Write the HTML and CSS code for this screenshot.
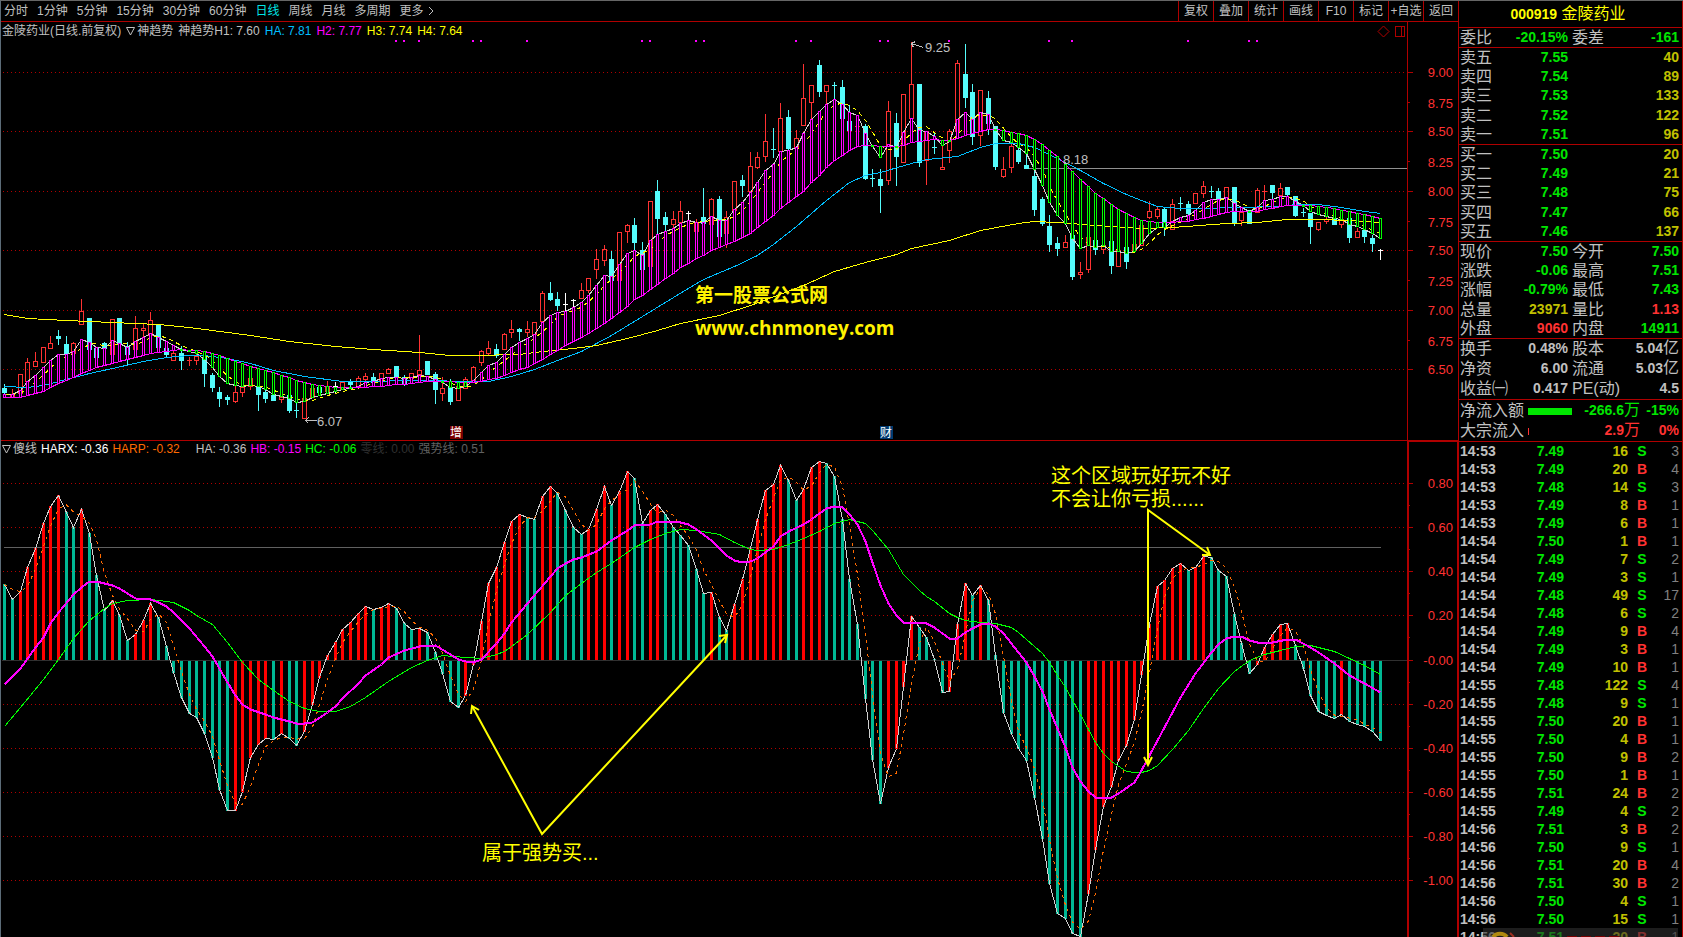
FILE: index.html
```html
<!DOCTYPE html>
<html lang="zh-CN">
<head>
<meta charset="utf-8">
<title>金陵药业 000919 日线</title>
<link rel="stylesheet" href="styles.css">
</head>
<body>
<div class="app">
  <main class="main">
    <header class="toolbar">
      <nav class="periods">
        <a href="#">分时</a><a href="#">1分钟</a><a href="#">5分钟</a><a href="#">15分钟</a><a href="#">30分钟</a><a href="#">60分钟</a><a href="#" class="active">日线</a><a href="#">周线</a><a href="#">月线</a><a href="#">多周期</a><a href="#" class="more">更多<svg class="chevron" viewBox="0 0 6 10" aria-hidden="true"><path d="M1 1l4 4-4 4"/></svg></a>
      </nav>
      <div class="tools">
        <button type="button">复权</button><button type="button">叠加</button><button type="button">统计</button><button type="button">画线</button><button type="button">F10</button><button type="button">标记</button><button type="button">+自选</button><button type="button">返回</button>
      </div>
    </header>

    <section class="panel price-panel">
      <div class="legend">
        <span>金陵药业(日线.前复权)</span><span class="pick"><svg class="tri" viewBox="0 0 9 9" aria-hidden="true"><path d="M.5 .5h8L4.500 8z"/></svg>神趋势</span><span>神趋势H1: 7.60</span><span class="c-sky">HA: 7.81</span><span class="c-mag">H2: 7.77</span><span class="c-yel">H3: 7.74</span><span class="c-yel">H4: 7.64</span>
      </div>
      <svg id="price" class="chart" viewBox="0 22 1459 418" role="img" aria-label="日线K线图"></svg>
    </section>

    <section class="panel osc-panel">
      <div class="legend tight">
        <span class="pick"><svg class="tri" viewBox="0 0 9 9" aria-hidden="true"><path d="M.5 .5h8L4.500 8z"/></svg>傻线</span><span class="c-white">HARX: -0.36</span><span class="c-org">HARP: -0.32</span><span class="gap">HA: -0.36</span><span class="c-mag">HB: -0.15</span><span class="c-lime">HC: -0.06</span><span class="c-dim">零线: 0.00</span><span class="c-gray">强势线: 0.51</span>
      </div>
      <svg id="osc" class="chart" viewBox="0 440 1459 497" role="img" aria-label="傻线指标图"></svg>
    </section>
  </main>

  <aside class="side">
    <h1 class="title"><b>000919</b> 金陵药业</h1>
    <table class="grid4 one">
      <tr><th>委比</th><td class="g">-20.15%</td><th>委差</th><td class="g">-161</td></tr>
    </table>
    <table class="book">
      <tr><th>卖五</th><td class="g">7.55</td><td class="y">40</td></tr>
      <tr><th>卖四</th><td class="g">7.54</td><td class="y">89</td></tr>
      <tr><th>卖三</th><td class="g">7.53</td><td class="y">133</td></tr>
      <tr><th>卖二</th><td class="g">7.52</td><td class="y">122</td></tr>
      <tr><th>卖一</th><td class="g">7.51</td><td class="y">96</td></tr>
    </table>
    <table class="book">
      <tr><th>买一</th><td class="g">7.50</td><td class="y">20</td></tr>
      <tr><th>买二</th><td class="g">7.49</td><td class="y">21</td></tr>
      <tr><th>买三</th><td class="g">7.48</td><td class="y">75</td></tr>
      <tr><th>买四</th><td class="g">7.47</td><td class="y">66</td></tr>
      <tr><th>买五</th><td class="g">7.46</td><td class="y">137</td></tr>
    </table>
    <table class="grid4">
      <tr><th>现价</th><td class="g">7.50</td><th>今开</th><td class="g">7.50</td></tr>
      <tr><th>涨跌</th><td class="g">-0.06</td><th>最高</th><td class="g">7.51</td></tr>
      <tr><th>涨幅</th><td class="g">-0.79%</td><th>最低</th><td class="g">7.43</td></tr>
      <tr><th>总量</th><td class="y">23971</td><th>量比</th><td class="r">1.13</td></tr>
      <tr><th>外盘</th><td class="r">9060</th><th>内盘</th><td class="g">14911</td></tr>
    </table>
    <table class="grid4 loose">
      <tr><th>换手</th><td>0.48%</td><th>股本</th><td>5.04<i>亿</i></td></tr>
      <tr><th>净资</th><td>6.00</td><th>流通</th><td>5.03<i>亿</i></td></tr>
      <tr><th>收益㈠</th><td>0.417</td><th>PE(动)</th><td>4.5</td></tr>
    </table>
    <table class="flow">
      <tr><th>净流入额</th><td><span class="bar" style="width:44px"></span></td><td class="g">-266.6<i>万</i></td><td class="g">-15%</td></tr>
      <tr><th>大宗流入</th><td><span class="bar thin" style="width:1px"></span></td><td class="r">2.9<i>万</i></td><td class="r">0%</td></tr>
    </table>
    <div class="ticks"><table id="ticks"></table>
      <div class="mark" aria-hidden="true"><svg viewBox="0 0 195 9"><path d="M10 9a9 9 0 0 1 14 0" fill="none" stroke="#b08a10" stroke-width="4"/><path d="M27 5l4 4" stroke="#a03020" stroke-width="2"/><path d="M84 8.500h56" stroke="#7a0000" stroke-width="1" stroke-dasharray="10 4"/></svg></div>
    </div>
  </aside>
</div>
<script src="chart.js"></script>
</body>
</html>
```
FILE: styles.css
```css
* { box-sizing: border-box; }

body {
  margin: 0;
  background: #000;
  color: #c0c0c0;
  font: 12px/20px "Liberation Sans", "Noto Sans CJK SC", sans-serif;
}

.app {
  display: flex;
  height: 100vh;
  overflow: hidden;
  border-top: 1px solid #666;
  border-left: 1px solid #5c6c78;
}

.main {
  flex: 1;
  min-width: 0;
  display: flex;
  flex-direction: column;
  margin-left: -1px;
}

/* toolbar */
.toolbar {
  display: flex;
  justify-content: space-between;
  height: 21px;
  border-bottom: 1px solid #b00000;
  padding-left: 4px;
}
.periods { display: flex; gap: 9px; white-space: nowrap; }
.periods a { color: #c0c0c0; text-decoration: none; }
.periods .active { color: #00e6e6; }
.more { display: flex; align-items: center; gap: 4px; }
.chevron { width: 6px; height: 10px; fill: none; stroke: #c0c0c0; }
.tools { display: flex; border-right: 1px solid #b00000; }
.tools button {
  width: 35px;
  padding: 0;
  border: 0;
  border-left: 1px solid #b00000;
  background: none;
  color: #c0c0c0;
  font: inherit;
  white-space: nowrap;
}

/* chart panels */
.panel { position: relative; }
.legend {
  position: absolute;
  left: 2px;
  top: 0;
  display: flex;
  gap: 5px;
  line-height: 18px;
  white-space: nowrap;
}
.legend.tight { gap: 4px; }
.legend .gap { margin-left: 12px; }
.pick { display: flex; align-items: center; gap: 2px; }
.tri { width: 9px; height: 9px; fill: none; stroke: #c0c0c0; }
.chart { display: block; width: 100%; height: auto; }
.chart text { font-size: 13px; fill: #c0c0c0; }
.chart text.axis { fill: #ff3232; text-anchor: end; }
.chart text.badge { fill: #fff; font-size: 12px; text-anchor: middle; }
.chart text.note { fill: #ffff00; font-size: 20px; }
.chart text.site { fill: #fff200; font-size: 19px; font-weight: 700; }
.chart text.url { fill: #fff200; font: 700 19px "Open Sans", sans-serif; }
.crisp { shape-rendering: crispEdges; }

.c-sky { color: #00bfff; }
.c-mag { color: #ff00ff; }
.c-yel { color: #ffff00; }
.c-white { color: #fff; }
.c-org { color: #ff6a00; }
.c-lime { color: #00ff00; }
.c-dim { color: #303030; }
.c-gray { color: #606060; }

/* quote sidebar */
.side {
  flex: none;
  width: 224px;
  display: flex;
  flex-direction: column;
  border-right: 1px solid #b00000;
}
.title {
  margin: 0;
  height: 27px;
  padding-right: 5px;
  border-bottom: 1px solid #b00000;
  color: #ffff00;
  font-size: 16px;
  font-weight: 400;
  line-height: 26px;
  text-align: center;
}
.title b { font-size: 14px; }
.side table {
  width: 100%;
  table-layout: fixed;
  border-collapse: collapse;
}
.side > table { border-bottom: 1px solid #b00000; }
.side th, .side td { height: 19px; padding: 0; line-height: 19px; white-space: nowrap; }
.side th { font-size: 16px; font-weight: 400; text-align: left; padding-left: 1px; }
.side td { font-size: 14px; font-weight: 700; text-align: right; }
.side td i { font-size: 16px; font-style: normal; font-weight: 400; line-height: 16px; }
.side .g { color: #00e600; }
.side .y { color: #c0c000; }
.side .r { color: #ff3232; }
.grid4 th:first-child { width: 50px; }
.grid4 td:nth-child(2) { width: 59px; }
.grid4 th:nth-child(3) { width: 52px; padding-left: 4px; }
.grid4 td:last-child, .book td:last-child, .flow td:last-child { padding-right: 3px; }
.book { height: 97px; }
.grid4 { height: 97px; }
.grid4.one { height: 20px; }
.grid4.loose { height: 61px; }
.book th { width: 50px; }
.book td:nth-child(2) { width: 59px; }
.flow { height: 42px; }
.flow th { width: 69px; }
.flow td:nth-child(2) { width: 46px; text-align: left; }
.flow td:nth-child(3) { width: 66px; }
.bar { display: inline-block; height: 7px; background: #00e600; vertical-align: middle; }
.bar.thin { background: #ff3232; }

.ticks { position: relative; flex: 1; min-height: 0; overflow: hidden; }
.ticks td { height: 18px; line-height: 18px; }
.ticks td:nth-child(1) { width: 50px; padding-left: 1px; text-align: left; }
.ticks td:nth-child(2) { width: 55px; }
.ticks td:nth-child(3) { width: 64px; }
.ticks td:nth-child(4) { width: 28px; text-align: center; }
.ticks td:nth-child(5) { padding-right: 3px; color: #808080; font-weight: 400; }
.mark { position: absolute; right: 4px; bottom: 0; width: 195px; height: 9px; background: rgba(48, 48, 48, .6); }
.mark svg { display: block; width: 100%; height: 100%; }
```
FILE: chart.js
```js
const RED = '#ff3232', GRID = '#b00000', CYAN = '#54fcfc', MAG = '#ff00ff', GRN = '#00ff00';
const X = i => Math.round(4.2 + i * 7.684);

// candles: kind, high, body top, body bottom, low
const candles = `c384,388,392,393 r389,394,397,397 r374,374,393,397 r358,362,381,385 r352,361,366,366 r347,347,362,362 r336,343,348,348 c330,336,338,344 c336,344,353,353 r342,343,353,356
r299,311,324,325 c318,318,349,349 c347,348,357,359 c342,343,348,353 r319,319,354,354 c318,318,343,343 c342,347,354,364 r316,328,349,349 r324,328,330,339 r312,320,335,335
c324,324,347,347 c348,348,354,357 r349,353,360,361 c346,353,360,369 r357,360,361,365 r354,356,360,365 c354,357,373,386 c373,375,387,391 c387,392,398,406 c395,397,399,404
r386,392,401,403 r386,387,392,397 r373,378,386,390 c386,387,394,410 c389,392,398,402 c395,395,400,400 r394,397,399,403 c393,395,410,412 c401,410,411,417 r398,398,418,418
r384,388,397,397 c385,387,392,392 r381,386,391,393 w382,386,387,392 r382,382,389,389 c379,381,384,388 r376,378,386,386 r373,376,379,381 c373,377,382,382 r373,373,381,384
r368,369,373,374 c366,366,377,380 c375,377,383,385 r373,373,378,382 r335,370,374,380 c361,361,374,374 c372,374,389,403 r377,388,393,401 c379,387,401,404 r386,386,400,400
r377,379,388,388 r366,367,380,380 r350,351,362,366 r341,348,353,355 c344,349,355,357 r333,334,349,350 r320,329,332,338 c328,329,331,340 r321,329,332,337 r322,322,334,334
r291,293,321,321 c282,293,299,300 c292,299,305,310 w293,304,305,311 w299,300,301,307 r283,290,298,299 r278,278,290,293 r249,259,269,279 r245,249,260,266 c251,259,280,280
r232,232,280,280 r224,225,231,243 c218,225,242,254 c242,250,269,269 r201,201,266,266 c180,191,218,234 c212,217,224,230 r211,219,224,228 r201,211,222,223 w211,213,214,221
r219,222,231,231 c188,217,223,224 r198,199,224,224 c196,199,236,236 r211,217,233,248 r181,181,210,210 c175,180,185,196 r152,166,191,192 r152,157,167,169 r114,141,156,162
c128,149,150,157 r103,118,151,151 c110,117,148,149 r130,138,147,147 r64,98,125,125 r85,85,102,119 c60,65,91,96 r85,85,91,104 c82,85,86,99 c80,87,118,118
c105,121,130,130 r115,126,127,127 c124,126,178,179 c169,178,179,186 c169,179,185,212 r101,111,180,185 c113,123,156,185 r94,94,162,162 r42,84,118,118 c84,84,162,166
r131,131,160,185 c132,147,148,153 r145,167,169,169 r129,131,150,163 r60,63,131,131 c44,74,97,107 c84,92,136,144 r90,90,135,146 c91,98,123,134 c126,126,166,169
r157,169,176,178 r144,146,167,173 c147,150,161,163 c153,165,168,168 c169,176,209,215 c197,199,223,225 c215,226,244,251 c237,243,248,255 r235,242,247,248 c235,235,276,279
r262,272,274,279 r237,237,269,273 c238,240,249,254 r245,245,249,254 c241,241,265,273 r250,250,266,266 c247,247,261,268 r243,244,250,250 r225,225,245,245 r201,211,217,219
r207,209,216,219 c207,209,227,235 r199,204,229,229 c197,203,204,210 c201,204,213,215 r193,193,203,203 r181,186,193,198 c186,191,192,197 c188,191,198,199 r187,187,198,198
c187,187,223,225 r212,212,220,226 c210,211,223,223 r188,190,212,212 r185,191,191,199 c185,185,192,199 r183,188,195,195 c187,187,194,195 c196,196,215,216 c208,212,213,216
c213,213,226,243 r222,222,229,231 r217,219,221,224 c218,219,224,224 r217,219,224,228 c215,218,237,242 r228,231,237,237 c230,230,236,242 c235,238,243,251 w249,250,251,259`
  .split(/\s+/).map(s => [s[0], ...s.slice(1).split(',').map(Number)]);

const h1 = [394,394,390,381,375,367,360,354,354,351,339,342,347,348,340,343,347,341,337,333,337,341,345,349,351,353,359,367,376,383,385,386,385,386,389,394,396,398,402,401,397,395,393,391,389,388,386,382,381,378,377,377,378,377,375,376,379,382,387,388,386,380,
372,365,362,354,347,342,338,334,322,315,312,311,307,302,295,285,275,276,264,253,250,255,240,234,231,228,223,220,222,222,216,220,220,209,202,192,182,170,164,151,150,147,133,119,111,104,99,104,112,115,133,146,157,144,147,132,118,130,131,136,145,141,119,112,119,112,114,129,140,142,147,153,169,185,202,215,223,238,248,245,247,245,251,251,253,251,
243,233,227,227,221,217,215,210,202,199,199,197,203,207,211,207,200,199,196,196,201,205,211,214,216,218,219,224,226,229,233,238];
const h2 = [397,397,397,395,393,391,387,383,380,377,373,370,367,365,363,361,359,357,355,353,352,351,350,349,350,350,351,353,355,358,361,363,366,368,370,372,375,377,380,382,384,385,386,387,387,387,387,387,386,386,385,384,384,383,382,381,381,381,381,382,382,382,
381,379,378,375,372,369,367,363,359,354,350,345,341,337,333,328,323,318,312,306,299,295,289,284,278,273,267,263,258,255,250,247,244,241,237,233,227,221,215,208,202,196,191,182,175,167,160,155,150,146,145,145,146,146,146,145,142,141,140,139,140,140,138,135,133,131,129,129,130,132,133,135,139,144,150,156,164,171,179,186,193,198,204,209,213,217,
220,221,222,222,222,221,221,219,218,216,214,212,211,211,211,211,209,208,206,205,205,205,205,206,207,208,210,211,213,214,216,218];

// slow averages: index, y
const slow = [0,386,3,387,5,385,7,381,11,373,14,368,18,361,21,357,24,355,26,355,29,358,32,363,35,370,39,376,44,381,48,381,52,380,56,380,59,381,63,381,66,376,69,369,72,360,75,351,79,335,83,316,87,297,91,279,95,266,98,255,100,244,103,226,107,200,110,182,112,175,114,172,118,163,120,159,124,156,127,147,129,143,132,143,134,147,137,158,140,170,143,183,146,194,148,200,150,206,153,208,156,208,160,207,166,206,168,204,171,204,174,207,177,211,179,213];
const base = [0,314,3,318,8,320,11,321,14,322,20,324,24,327,27,330,32,335,37,341,43,346,48,349,54,352,58,355,61,355,67,354,70,351,74,348,77,345,81,338,85,330,88,323,93,315,97,305,104,285,108,271,112,262,116,254,118,248,123,240,127,230,132,223,134,221,137,222,142,225,148,228,152,227,159,223,163,222,167,219,171,219,175,220,179,222];

// oscillator, measured from the top of its panel
const harx = [144,159,151,127,108,83,66,55,72,87,69,93,135,170,160,175,200,194,180,163,177,206,232,257,273,277,293,317,349,370,370,351,317,304,298,299,293,298,305,291,264,237,215,202,189,182,173,166,169,167,163,168,183,189,188,192,212,233,261,267,255,224,
181,143,127,102,81,74,77,79,56,46,53,70,87,94,89,69,46,65,51,31,38,83,70,64,74,87,95,105,129,153,152,177,190,164,139,108,79,50,44,25,40,60,49,27,21,23,36,79,139,184,258,319,363,327,308,246,176,187,197,219,252,251,184,143,155,145,160,215,272,293,308,320,357,398,443,473,478,493,496,453,409,366,346,320,305,279,234,184,146,140,128,123,130,127,116,117,130,136,174,203,233,224,207,194,184,183,205,228,255,271,275,278,274,281,284,286,291,300];
const hb = [0,244,2,228,4,207,5,197,6,183,7,172,9,154,10,147,11,141,12,141,14,145,15,148,16,153,17,158,19,159,20,162,21,166,22,172,24,188,26,206,27,216,29,242,30,255,31,264,32,269,34,274,35,277,37,281,38,283,39,283,40,282,42,272,43,266,44,258,46,243,47,235,49,224,50,217,52,210,54,206,56,205,58,214,59,219,60,221,61,222,62,219,64,203,65,193,66,182,68,163,71,136,72,128,73,123,74,119,75,117,77,111,79,100,81,90,82,85,84,84,85,81,86,81,88,82,89,84,90,89,92,100,93,108,94,115,95,120,96,122,97,121,98,118,100,106,101,96,102,91,104,84,105,79,106,73,107,68,108,66,109,67,110,74,111,84,112,101,113,122,114,145,115,163,116,175,117,182,119,182,120,183,121,187,122,193,123,198,124,198,125,192,126,188,127,184,128,183,129,186,130,193,132,212,133,222,134,236,135,251,136,269,137,288,138,307,139,327,140,341,141,351,142,357,144,357,145,353,147,342,148,330,149,315,151,287,152,272,153,257,155,233,157,212,158,204,159,198,160,196,161,196,162,200,163,202,165,202,167,199,168,199,170,207,171,212,173,223,175,235,177,243,179,252];
const hc = [0,286,2,267,5,239,7,219,9,198,11,180,13,168,14,163,16,160,19,159,21,161,22,162,24,170,25,175,27,184,29,202,31,222,33,239,35,250,37,261,39,268,41,271,43,271,45,266,47,257,50,241,53,227,55,220,57,215,60,217,62,218,64,214,65,211,66,206,68,194,71,172,73,155,75,143,77,132,79,123,82,107,84,99,86,93,88,89,90,90,93,94,95,102,97,109,98,110,100,109,102,104,104,98,106,91,108,83,110,79,112,83,113,90,115,109,117,134,119,150,120,156,121,161,123,173,124,177,125,180,127,182,129,183,131,187,132,192,134,206,135,213,136,222,137,235,138,247,140,274,142,302,143,313,144,321,146,331,147,332,148,332,149,330,150,325,152,309,154,290,156,268,158,248,160,231,162,220,164,214,166,210,168,206,170,205,171,207,173,211,175,218,177,225,179,234];

const rect = (x, y, w, h, fill) => `<rect x="${x}" y="${y}" width="${w}" height="${h}" fill="${fill}"/>`;
const box = (x, y, w, h, c, fill = 'none') => `<rect x="${x + .5}" y="${y + .5}" width="${w - 1}" height="${Math.max(h - 1, 1)}" fill="${fill}" stroke="${c}"/>`;
const line = (pts, c, extra = '') => `<polyline points="${pts.map(p => (p[0] + .5) + ',' + (p[1] + .5)).join(' ')}" fill="none" stroke="${c}" ${extra}/>`;
const arrow = pts => `<polyline points="${pts.map(p => p.join()).join(' ')}" fill="none" stroke="#ffff00" stroke-width="2"/>`;
const series = (a, dy = 0) => a.map((v, i) => [X(i), v + dy]);
const pairs = (a, dy = 0) => { const r = []; for (let i = 0; i < a.length; i += 2) r.push([X(a[i]), a[i + 1] + dy]); return r; };
const ma3 = a => a.map((v, i) => (v + a[Math.max(i - 1, 0)] + a[Math.max(i - 2, 0)]) / 3);
const text = (x, y, s, cls = '') => `<text x="${x}" y="${y}" class="${cls}">${s}</text>`;
const grid = y => line([[2, y], [1406, y]], GRID, 'stroke-dasharray="1 3"');

function drawPrice() {
  let s = '', t = '';
  [72, 131, 191, 250, 310, 369].forEach((y, k) => {
    s += grid(y) + rect(1408, y, 5, 1, GRID);
    t += text(1453, y + 5, (9 - k / 2).toFixed(2), 'axis');
    if (k < 5) { s += rect(1408, y + 30, 2, 1, GRID); t += text(1453, y + 36, (8.75 - k / 2).toFixed(2), 'axis'); }
  });
  s += rect(1407, 22, 1, 418, GRID) + rect(1458, 22, 1, 418, GRID) + rect(1027, 168, 380, 1, '#909090');
  candles.forEach(([k, hi, top, bot, lo], i) => {
    const x = X(i), c = k === 'r' ? RED : k === 'c' ? CYAN : '#fff', h = bot - top + 1;
    if (k === 'r' && h > 2) {
      s += rect(x, hi, 1, top - hi, c) + box(x - 2, top, 5, h, c) + rect(x, bot, 1, lo - bot, c);
    } else {
      s += rect(x, hi, 1, lo - hi + 1, c) + rect(x - 2, top, 5, h > 2 ? h : 1, c);
    }
  });
  s += line(series(h1), '#d0d0d0') + line(series(ma3(h1)), '#ffff00', 'stroke-dasharray="4 4"');
  s += line(pairs(slow), '#00bfff') + line(pairs(base), '#ffff00') + line(series(h2), MAG);
  h1.forEach((v, i) => {
    const a = Math.min(v, h2[i]), b = Math.max(v, h2[i]);
    s += box(X(i) - 1, a, 3, b - a + 1, v < h2[i] ? MAG : GRN, '#000');
  });
  [396, 404, 419, 473, 481, 527, 642, 650, 696, 704, 796, 811, 880, 888, 949, 1049, 1072, 1188, 1249, 1257].forEach(x => { s += rect(x - 1, 40, 2, 2, MAG); });
  s += line([[911, 43], [923, 47]], '#c0c0c0') + line([[915, 41], [911, 43], [913, 47]], '#c0c0c0');
  s += line([[305, 420], [316, 420]], '#c0c0c0') + line([[308, 417], [305, 420], [308, 423]], '#c0c0c0');
  s += box(1395, 26, 10, 11, GRID) + rect(1401, 26, 1, 11, GRID);
  s += rect(450, 426, 13, 13, '#7a0000') + rect(880, 426, 13, 13, '#003a70');
  t += `<path d="M1383.500 26l5.500 5.500-5.500 5.500-5.500-5.500z" fill="none" stroke="${GRID}"/>`;
  t += text(925, 52, '9.25') + text(317, 426, '6.07') + text(1063, 164, '8.18');
  t += text(456, 437, '增', 'badge') + text(886, 437, '财', 'badge');
  t += text(695, 302, '第一股票公式网', 'site') + text(695, 335, 'www.chnmoney.com', 'url');
  document.getElementById('price').innerHTML = `<g class="crisp">${s}</g>${t}`;
}

function drawOsc() {
  const top = 440, zero = 660;
  let s = '', t = '';
  [483, 527, 571, 615, 660, 704, 748, 792, 836, 880].forEach((y, k) => {
    s += (k === 4 ? '' : grid(y)) + rect(1409, y, 4, 1, GRID);
    if (k < 9) s += rect(1409, y + 22, 1, 1, GRID);
    t += text(1453, y + 5, (k === 4 ? '-' : '') + (.8 - k * .2).toFixed(2).replace('-0.00', '0.00'), 'axis');
  });
  s += rect(2, zero, 1405, 1, '#303030') + rect(0, 440, 1459, 1, GRID) + rect(1407, 440, 52, 2, GRID);
  s += rect(1407, 440, 2, 497, GRID) + rect(1457, 440, 2, 497, GRID) + rect(4, 547, 1377, 1, '#606060');
  harx.forEach((v, i) => {
    const y = top + v, c = i && v <= harx[i - 1] && i !== 30 ? '#ff0000' : '#00b894';
    const fill = i === 30 ? '#ff0000' : c;
    s += y < zero ? rect(X(i) - 1, y, 3, zero - y, fill) : rect(X(i) - 1, zero + 1, 3, y - zero, fill);
  });
  s += line(series(harx, top), '#d0d0d0') + line(series(ma3(harx), top), '#ff6a00', 'stroke-dasharray="3 4"');
  s += line(pairs(hc, top), GRN) + line(pairs(hb, top), MAG, 'stroke-width="2"');
  t += arrow([[472, 706], [542, 834], [727, 635]]) + arrow([[471, 714], [472, 706], [479, 710]]) + arrow([[719, 636], [727, 635], [725, 643]]);
  t += arrow([[1148, 765], [1148, 510], [1210, 555]]) + arrow([[1144, 757], [1148, 765], [1152, 757]]) + arrow([[1207, 547], [1210, 555], [1202, 555]]);
  t += text(1051, 483, '这个区域玩好玩不好', 'note') + text(1051, 506, '不会让你亏损......', 'note') + text(482, 860, '属于强势买...', 'note');
  document.getElementById('osc').innerHTML = `<g class="crisp">${s}</g>${t}`;
}

const deals = `14:53 7.49 16 S 3|14:53 7.49 20 B 4|14:53 7.48 14 S 3|14:53 7.49 8 B 1|14:53 7.49 6 B 1|14:54 7.50 1 B 1|14:54 7.49 7 S 2|14:54 7.49 3 S 1|14:54 7.48 49 S 17|14:54 7.48 6 S 2|14:54 7.49 9 B 4|14:54 7.49 3 B 1|14:54 7.49 10 B 1|14:55 7.48 122 S 4|14:55 7.48 9 S 1|14:55 7.50 20 B 1|14:55 7.50 4 B 1|14:55 7.50 9 B 2|14:55 7.50 1 B 1|14:55 7.51 24 B 2|14:55 7.49 4 S 2|14:56 7.51 3 B 2|14:56 7.50 9 S 1|14:56 7.51 20 B 4|14:56 7.51 30 B 2|14:56 7.50 4 S 1|14:56 7.50 15 S 1|14:56 7.51 20 B 1`;
document.getElementById('ticks').innerHTML = deals.split('|').map(d => {
  const [tm, p, v, side, n] = d.split(' ');
  return `<tr><td>${tm}</td><td class="g">${p}</td><td class="y">${v}</td><td class="${side === 'B' ? 'r' : 'g'}">${side}</td><td>${n}</td></tr>`;
}).join('');

drawPrice();
drawOsc();
```
